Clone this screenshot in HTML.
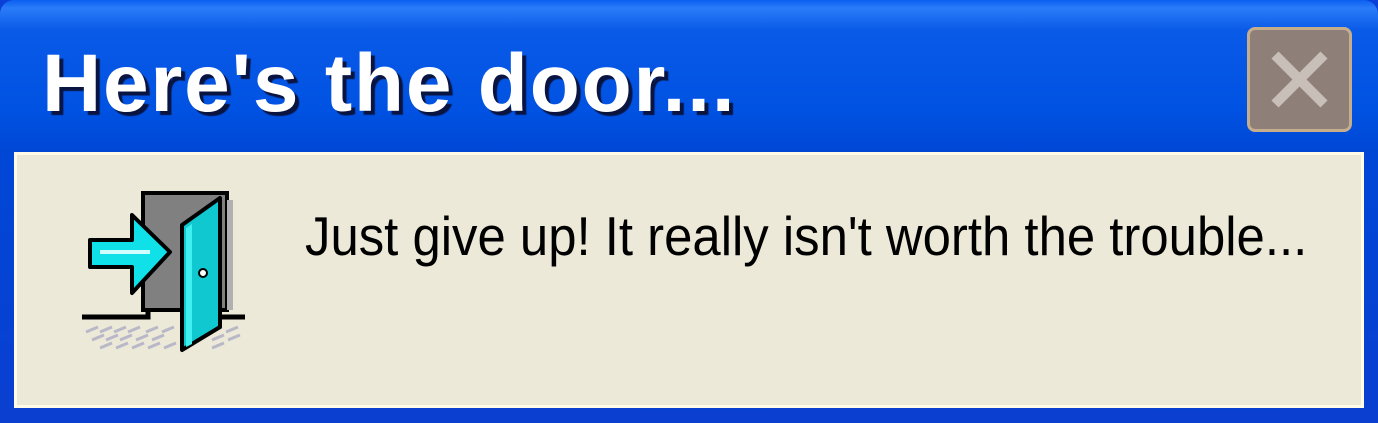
<!DOCTYPE html>
<html><head><style>
html,body{margin:0;padding:0;width:1378px;height:423px;overflow:hidden;background:#0a3fd8}
.win{position:absolute;left:0;top:0;width:1378px;height:423px;background:linear-gradient(#0a5ff0 0px,#2a7cf8 8px,#0a5ae8 30px,#0052e2 110px,#0047d6 150px,#0a3fd0 423px);border-radius:14px 14px 0 0}
.title{position:absolute;left:42px;top:43px;font:bold 82px/82px "Liberation Sans",sans-serif;color:#fff;text-shadow:4px 4px 1px #0a1440;white-space:nowrap;letter-spacing:1.8px}
.close{position:absolute;left:1247px;top:27px;width:99px;height:99px;background:#8e7f78;border:3px solid #c6ad8c;border-radius:8px}
.body{position:absolute;left:14px;top:152px;width:1350px;height:256px;background:#ECE9D8;box-shadow:inset 3px 3px 0 #fffbe8,inset -3px -3px 0 #fffbe8}
.msg{position:absolute;left:305px;top:204px;font:55px "Liberation Sans",sans-serif;color:#000;white-space:nowrap;transform:scaleX(0.925);transform-origin:0 0}
</style></head><body>
<div class="win">
<div class="title">Here's the door...</div>
<div class="close"><svg width="99" height="99" viewBox="0 0 99 99"><path d="M25 25L74 74M74 25L25 74" stroke="#c8c0b8" stroke-width="10"/></svg></div>
<div class="body"></div>
<svg style="position:absolute;left:0;top:0" width="300" height="423">
<g stroke="#b8b8c8" stroke-width="3">
<path d="M86 332l12-5M100 332l12-5M114 332l12-5M128 332l12-5M146 332l12-5M162 332l12-5M210 332l12-5M226 332l12-5"/>
<path d="M92 340l12-5M106 340l12-5M120 340l12-5M136 340l12-5M152 340l12-5M212 340l12-5M228 340l12-5"/>
<path d="M100 348l12-5M116 348l12-5M132 348l12-5M148 348l12-5M164 348l12-5M212 348l12-5"/>
</g>
<path d="M82 317H148V310M215 317H245" stroke="#000" stroke-width="5" fill="none"/>
<rect x="143" y="193" width="84" height="117" fill="#808080" stroke="#000" stroke-width="4"/>
<rect x="227" y="200" width="6" height="110" fill="#b0b0b0"/>
<path d="M90 240H132V215L170 252L132 293V267H90Z" fill="#10e0e8" stroke="#000" stroke-width="4" stroke-linejoin="round"/>
<path d="M100 252H150" stroke="#d0ffff" stroke-width="4"/>
<path d="M182 225L220 198V327L182 350Z" fill="#10c8d0" stroke="#000" stroke-width="4" stroke-linejoin="round"/>
<path d="M186 228L192 224V344L186 347Z" fill="#40f0f0"/>
<circle cx="203" cy="273" r="4" fill="#fff" stroke="#000" stroke-width="2"/>
</svg>
<div class="msg">Just give up! It really isn't worth the trouble...</div>
</div>
</body></html>
